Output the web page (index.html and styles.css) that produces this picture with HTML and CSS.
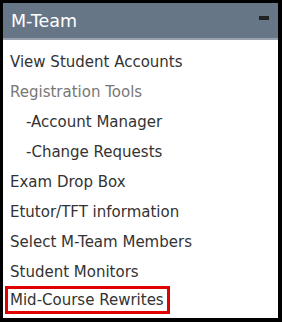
FILE: index.html
```html
<!DOCTYPE html>
<html lang="en">
<head>
    <meta charset="UTF-8">
    <title>M-Team</title>
    <link rel="stylesheet" href="styles.css">
</head>
<body>
    <div class="panel">
        <div class="panel-head">
            <span class="panel-title">M-Team</span>
            <span class="collapse"></span>
        </div>
        <ul class="menu">
            <li><a href="#">View Student Accounts</a></li>
            <li class="group">Registration Tools</li>
            <li class="sub"><a href="#">-Account Manager</a></li>
            <li class="sub"><a href="#">-Change Requests</a></li>
            <li><a href="#">Exam Drop Box</a></li>
            <li><a href="#">Etutor/TFT information</a></li>
            <li><a href="#">Select M-Team Members</a></li>
            <li><a href="#">Student Monitors</a></li>
            <li class="marked"><a href="#">Mid-Course Rewrites</a></li>
        </ul>
    </div>
</body>
</html>
```

FILE: styles.css
```css
body {
    margin: 0;
    font-family: "DejaVu Sans", Verdana, sans-serif;
}

.panel {
    width: 275px;
    height: 315px;
    border-style: solid;
    border-color: #000;
    border-width: 3px 4px 4px 3px;
    background-color: #fff;
    overflow: hidden;
}

.panel-head {
    display: flex;
    align-items: center;
    justify-content: space-between;
    height: 35px;
    padding: 0 9px 0 8px;
    background-color: #677687;
    border-bottom: 2px solid #9aa3ad;
}

.panel-title {
    color: #fff;
    font-size: 17.5px;
}

.collapse {
    width: 10px;
    height: 4px;
    margin-top: -5px;
    background-color: #222;
}

.menu {
    list-style: none;
    margin: 0;
    padding: 7px 0 0 0;
}

.menu li {
    height: 30px;
    line-height: 30px;
    font-size: 15px;
    padding-left: 7px;
    color: #777;
}

.menu a {
    color: #333;
    text-decoration: none;
}

.menu .sub {
    padding-left: 23px;
}

.menu .marked {
    display: inline-block;
    height: 22px;
    line-height: 22px;
    margin: -1px 0 0 2px;
    padding: 0 3px 0 2px;
    border: 3px solid #e00000;
}
```
